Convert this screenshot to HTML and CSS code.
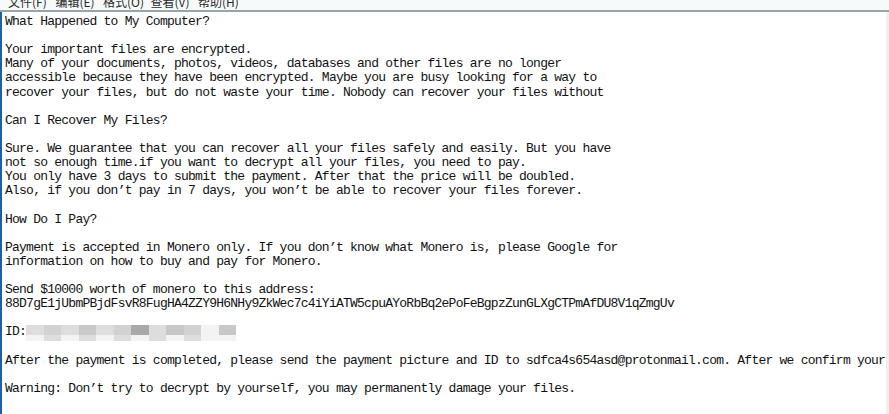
FILE: index.html
```html
<!DOCTYPE html>
<html>
<head>
<meta charset="utf-8">
<link rel="stylesheet" href="styles.css">
</head>
<body>
<div class="window">
  <div class="menubar">
    <span class="menu-item">文件(F)</span>
    <span class="menu-item">编辑(E)</span>
    <span class="menu-item">格式(O)</span>
    <span class="menu-item">查看(V)</span>
    <span class="menu-item">帮助(H)</span>
  </div>
  <div class="editor">
    <div class="text">
<div class="line">What Happened to My Computer?</div>
<div class="line"> </div>
<div class="line">Your important files are encrypted.</div>
<div class="line">Many of your documents, photos, videos, databases and other files are no longer</div>
<div class="line">accessible because they have been encrypted. Maybe you are busy looking for a way to</div>
<div class="line">recover your files, but do not waste your time. Nobody can recover your files without</div>
<div class="line"> </div>
<div class="line">Can I Recover My Files?</div>
<div class="line"> </div>
<div class="line">Sure. We guarantee that you can recover all your files safely and easily. But you have</div>
<div class="line">not so enough time.if you want to decrypt all your files, you need to pay.</div>
<div class="line">You only have 3 days to submit the payment. After that the price will be doubled.</div>
<div class="line">Also, if you don’t pay in 7 days, you won’t be able to recover your files forever.</div>
<div class="line"> </div>
<div class="line">How Do I Pay?</div>
<div class="line"> </div>
<div class="line">Payment is accepted in Monero only. If you don’t know what Monero is, please Google for</div>
<div class="line">information on how to buy and pay for Monero.</div>
<div class="line"> </div>
<div class="line">Send $10000 worth of monero to this address:</div>
<div class="line">88D7gE1jUbmPBjdFsvR8FugHA4ZZY9H6NHy9ZkWec7c4iYiATW5cpuAYoRbBq2ePoFeBgpzZunGLXgCTPmAfDU8V1qZmgUv</div>
<div class="line"> </div>
<div class="line id-line">ID:<span class="blur"><span class="blur-row top"><i class="b1"></i><i class="b2"></i><i class="b1"></i><i class="b3"></i><i class="b1"></i><i class="b2"></i><i class="b4"></i><i class="b1"></i><i class="b3"></i><i class="b2"></i><i class="b0"></i><i class="b3"></i></span><span class="blur-row bottom"><i class="b0"></i><i class="b1"></i><i class="b0"></i><i class="b1"></i><i class="b0"></i><i class="b1"></i><i class="b0"></i><i class="b1"></i><i class="b0"></i><i class="b1"></i><i class="b0"></i><i class="b0"></i></span></span></div>
<div class="line"> </div>
<div class="line">After the payment is completed, please send the payment picture and ID to sdfca4s654asd@protonmail.com. After we confirm your payment, we will send you the decryption key.</div>
<div class="line"> </div>
<div class="line">Warning: Don’t try to decrypt by yourself, you may permanently damage your files.</div>
    </div>
    <div class="scrollbar"></div>
  </div>
</div>
</body>
</html>
```

FILE: styles.css
```css
html, body {
  margin: 0;
  padding: 0;
  background: #ffffff;
  overflow: hidden;
}

.window {
  width: 889px;
  height: 414px;
  display: flex;
  flex-direction: column;
  background: #ffffff;
}

.menubar {
  height: 10px;
  flex: none;
  display: flex;
  align-items: flex-end;
  padding-left: 8px;
  overflow: hidden;
  background: #f7fafb;
  border-bottom: 2px solid #98a6a6;
  font-family: "Noto Sans CJK SC", "Noto Sans", sans-serif;
  font-size: 12px;
  color: #2a2a2a;
}

.menu-item {
  line-height: 15px;
  margin-bottom: 1px;
  width: 47.5px;
  flex: none;
  white-space: nowrap;
}

.editor {
  flex: 1;
  display: flex;
  min-height: 0;
  border-left: 2px solid #1d5fa8;
}

.text {
  flex: 1;
  min-width: 0;
  overflow: hidden;
  padding: 3px 0 0 3px;
  font-family: "Liberation Mono", "DejaVu Sans Mono", monospace;
  font-size: 13px;
  letter-spacing: -0.76px;
  line-height: 14.12px;
  color: #111111;
}

.line {
  white-space: pre;
  height: 14.12px;
}

.id-line {
  display: flex;
  align-items: flex-start;
}

.blur {
  display: inline-flex;
  flex-direction: column;
  margin-top: 0;
  filter: blur(0.6px);
}

.blur-row {
  display: flex;
}

.blur-row i {
  display: block;
  width: 17.5px;
}

.blur-row.top i {
  height: 10px;
}

.blur-row.bottom i {
  height: 6px;
}

.b0 { background: #f3f3f3; }
.b1 { background: #dddddd; }
.b2 { background: #d2d2d2; }
.b3 { background: #c8c8c8; }
.b4 { background: #a9a9a9; }

.scrollbar {
  width: 3px;
  flex: none;
  background: #efefef;
}
```
